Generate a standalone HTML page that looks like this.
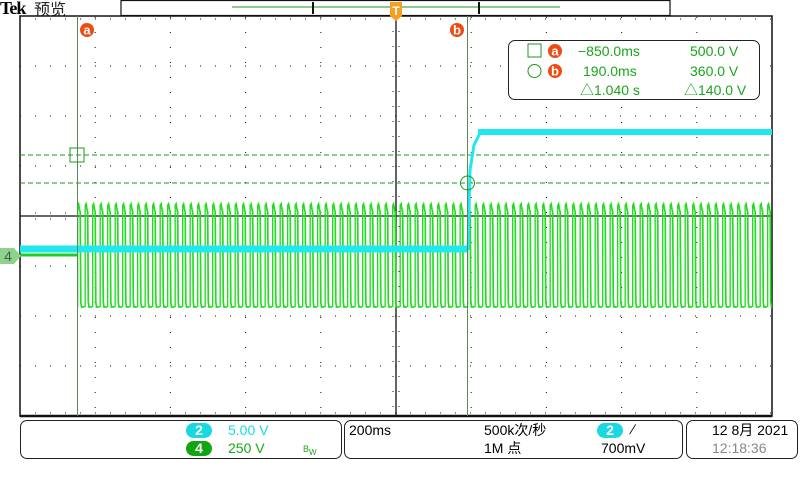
<!DOCTYPE html>
<html><head><meta charset="utf-8"><style>
body{margin:0;width:800px;height:480px;background:#fff;overflow:hidden;position:relative;font-family:"Liberation Sans","Noto Sans CJK SC",sans-serif}
.abs{position:absolute}
.box{position:absolute;border:1.5px solid #222;border-radius:7px;box-sizing:border-box}
.t{position:absolute;font-size:14px;white-space:nowrap;line-height:16px}
.g{color:#1aa51a}.c{color:#1ad8e0}
.pill{position:absolute;border-radius:9px;color:#fff;font-weight:bold;font-size:14px;text-align:center;line-height:15px;width:26px;height:15px}
</style></head><body>
<div class="t" style="left:0;top:0;font-family:'Liberation Serif',serif;font-weight:bold;font-size:18px;letter-spacing:-1px">Tek</div>
<div class="t" style="left:34px;top:0;font-size:16px;font-family:'Noto Sans CJK SC',sans-serif;color:#222">预览</div>
<svg class="abs" style="left:0;top:0" width="800" height="480">
<defs>
<pattern id="sq" x="77" y="0" width="7.5" height="480" patternUnits="userSpaceOnUse">
<path d="M0.5 307 L0.5 206 L1.6 204 L2.6 210 L3.2 212 L3.8 302 L4.5 307 L7.5 307" fill="none" stroke="#22dd22" stroke-width="1.7"/>
</pattern>
</defs>
<rect x="121" y="0.5" width="549" height="15" fill="#fff" stroke="#111" stroke-width="1.2"/>
<line x1="232" y1="7" x2="560" y2="7" stroke="#1a9a1a" stroke-width="1"/>
<path d="M313 2 v12 M479 2 v12" stroke="#111" stroke-width="2"/>
<g stroke="#111" stroke-width="1" stroke-dasharray="1 14">
<line x1="95.2" y1="17" x2="95.2" y2="416"/><line x1="170.4" y1="17" x2="170.4" y2="416"/><line x1="245.6" y1="17" x2="245.6" y2="416"/><line x1="320.8" y1="17" x2="320.8" y2="416"/><line x1="471.2" y1="17" x2="471.2" y2="416"/><line x1="546.4" y1="17" x2="546.4" y2="416"/><line x1="621.6" y1="17" x2="621.6" y2="416"/><line x1="696.8" y1="17" x2="696.8" y2="416"/>
<line x1="20" y1="66" x2="772" y2="66"/><line x1="20" y1="116" x2="772" y2="116"/><line x1="20" y1="166" x2="772" y2="166"/><line x1="20" y1="266" x2="772" y2="266"/><line x1="20" y1="316" x2="772" y2="316"/><line x1="20" y1="366" x2="772" y2="366"/>
<line x1="35" y1="213" x2="772" y2="213"/><line x1="35" y1="219" x2="772" y2="219"/>
<line x1="393" y1="31" x2="393" y2="416"/><line x1="399" y1="31" x2="399" y2="416"/>
<line x1="35" y1="19" x2="772" y2="19"/><line x1="35" y1="413" x2="772" y2="413"/>
</g>
<line x1="20" y1="216" x2="772" y2="216" stroke="#111" stroke-width="1.3"/>
<line x1="396" y1="16" x2="396" y2="416" stroke="#111" stroke-width="1.3"/>
<rect x="20" y="16" width="752" height="400" fill="none" stroke="#111" stroke-width="1.5"/>
<line x1="20" y1="416" x2="772" y2="416" stroke="#111" stroke-width="2.5"/>
<path d="M20 155 H772 M20 183 H772" stroke="#1a9a1a" stroke-dasharray="5 3" stroke-width="1"/>
<rect x="77" y="200" width="695" height="112" fill="url(#sq)"/>
<path d="M20 255 H77" stroke="#22cc22" stroke-width="3"/>
<path d="M20 249 H468" stroke="#20e8ee" stroke-width="7"/>
<path d="M468 250 L470 170 L474 145 L480 133 L772 133" fill="none" stroke="#20e8ee" stroke-width="3"/>
<path d="M478 132 H772" stroke="#20e8ee" stroke-width="6"/>
<line x1="77.5" y1="16" x2="77.5" y2="416" stroke="#5a8a5a" stroke-width="1"/>
<line x1="467.5" y1="16" x2="467.5" y2="416" stroke="#5a8a5a" stroke-width="1"/>
<rect x="70" y="148" width="14" height="14" fill="none" stroke="#1a9a1a"/>
<circle cx="467.5" cy="183" r="7" fill="none" stroke="#1a9a1a"/>
<circle cx="87" cy="30" r="7" fill="#f04a10"/>
<circle cx="457" cy="30" r="7" fill="#f04a10"/>
<text x="87" y="34.5" fill="#fff" font-size="13" font-weight="bold" text-anchor="middle" font-family="Liberation Sans">a</text>
<text x="457" y="34.5" fill="#fff" font-size="13" font-weight="bold" text-anchor="middle" font-family="Liberation Sans">b</text>
<path d="M390 2 H402 V16 L396 21 L390 16 Z" fill="#f5a020"/>
<text x="396" y="15" fill="#fff" font-size="12" font-weight="bold" text-anchor="middle" font-family="Liberation Sans">T</text>
<path d="M0 248 H14 L21 256 L14 264 H0 Z" fill="#8cd48c"/>
<text x="8" y="261" fill="#555" font-size="14" text-anchor="middle" font-family="Liberation Sans">4</text>
</svg>
<div class="box" style="left:508px;top:40px;width:252px;height:60px;background:#fff"></div>
<svg class="abs" style="left:0;top:0" width="800" height="480">
<rect x="528" y="44" width="13" height="13" fill="#fff" stroke="#1a9a1a"/>
<circle cx="534.5" cy="71" r="6.5" fill="#fff" stroke="#1a9a1a"/>
<circle cx="555" cy="51" r="7" fill="#f04a10"/>
<circle cx="555" cy="71" r="7" fill="#f04a10"/>
<text x="555" y="55.5" fill="#fff" font-size="13" font-weight="bold" text-anchor="middle" font-family="Liberation Sans">a</text>
<text x="555" y="75.5" fill="#fff" font-size="13" font-weight="bold" text-anchor="middle" font-family="Liberation Sans">b</text>
</svg>
<div class="t g" style="left:578px;top:43px">−850.0ms</div>
<div class="t g" style="left:690px;top:43px">500.0 V</div>
<div class="t g" style="left:583px;top:63px">190.0ms</div>
<div class="t g" style="left:690px;top:63px">360.0 V</div>
<div class="t g" style="left:580px;top:82px">△1.040 s</div>
<div class="t g" style="left:684px;top:82px">△140.0 V</div>
<div class="box" style="left:20px;top:420px;width:322px;height:39px"></div>
<div class="box" style="left:344px;top:420px;width:339px;height:39px"></div>
<div class="box" style="left:686px;top:420px;width:112px;height:39px"></div>
<div class="pill" style="left:186px;top:423px;background:#1ad8e0">2</div>
<div class="pill" style="left:186px;top:441px;background:#12a512">4</div>
<div class="t c" style="left:228px;top:422px">5.00 V</div>
<div class="t g" style="left:228px;top:440px">250 V</div>
<div class="t g" style="left:303px;top:441px;font-size:9px">B<sub style="font-size:8px">W</sub></div>
<div class="t" style="left:349px;top:422px">200ms</div>
<div class="t" style="left:484px;top:422px">500k次/秒</div>
<div class="t" style="left:484px;top:440px">1M 点</div>
<div class="pill" style="left:597px;top:423px;background:#1ad8e0">2</div>
<div class="t" style="left:632px;top:421px">∕</div>
<div class="t" style="left:601px;top:440px">700mV</div>
<div class="t" style="left:712px;top:422px">12 8月 2021</div>
<div class="t" style="left:712px;top:440px;color:#888">12:18:36</div>
</body></html>
